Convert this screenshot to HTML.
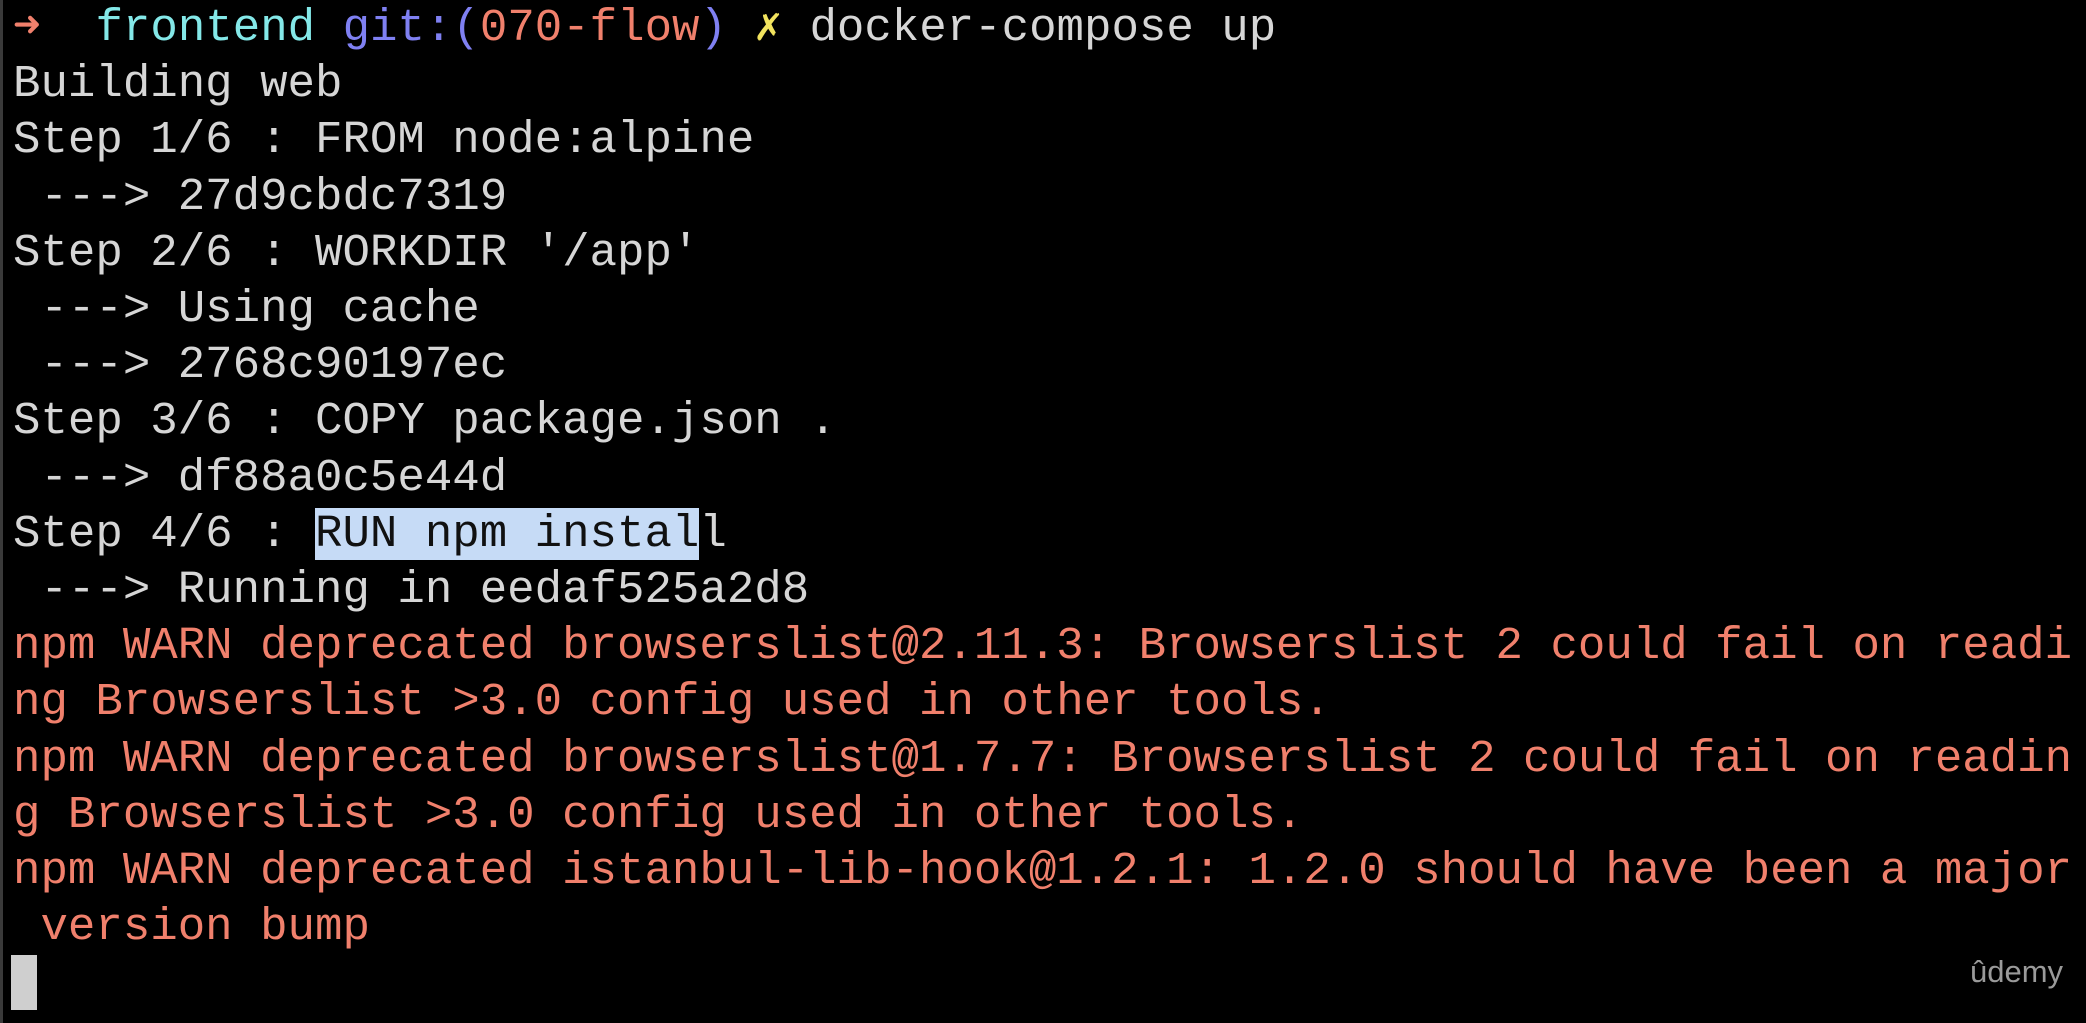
<!DOCTYPE html>
<html><head><meta charset="utf-8"><style>
html,body{margin:0;padding:0;background:#000;width:2086px;height:1023px;overflow:hidden}
.strip{position:absolute;left:0;top:0;width:3px;height:1023px;background:#3a3a3a}
pre{position:absolute;left:13px;top:0;margin:0;font-family:"Liberation Mono",monospace;font-size:45.75px;line-height:56.2px;color:#d6d6d6;white-space:pre}
.r{color:#f0806c}.c{color:#84e8e8}.b{color:#7f80f2}.y{color:#f2e35e}
.hl{background:#c6dbf6;color:#111}
.cur{position:absolute;left:11px;top:955px;width:26px;height:55px;background:#cfcfcf}
.ud{position:absolute;left:1970px;top:954px;font-family:"Liberation Sans",sans-serif;font-size:31px;color:#9a9a9a}
</style></head><body>
<div class="strip"></div>
<pre><span class="r"><b>➜</b></span>  <span class="c">frontend</span> <span class="b">git:(</span><span class="r">070-flow</span><span class="b">)</span> <span class="y">✗</span> docker-compose up
Building web
Step 1/6 : FROM node:alpine
 ---&gt; 27d9cbdc7319
Step 2/6 : WORKDIR '/app'
 ---&gt; Using cache
 ---&gt; 2768c90197ec
Step 3/6 : COPY package.json .
 ---&gt; df88a0c5e44d
Step 4/6 : <span class="hl">RUN npm instal</span>l
 ---&gt; Running in eedaf525a2d8
<span class="r">npm WARN deprecated browserslist@2.11.3: Browserslist 2 could fail on readi
ng Browserslist &gt;3.0 config used in other tools.
npm WARN deprecated browserslist@1.7.7: Browserslist 2 could fail on readin
g Browserslist &gt;3.0 config used in other tools.
npm WARN deprecated istanbul-lib-hook@1.2.1: 1.2.0 should have been a major
 version bump</span></pre>
<div class="cur"></div>
<div class="ud">ûdemy</div>
</body></html>
